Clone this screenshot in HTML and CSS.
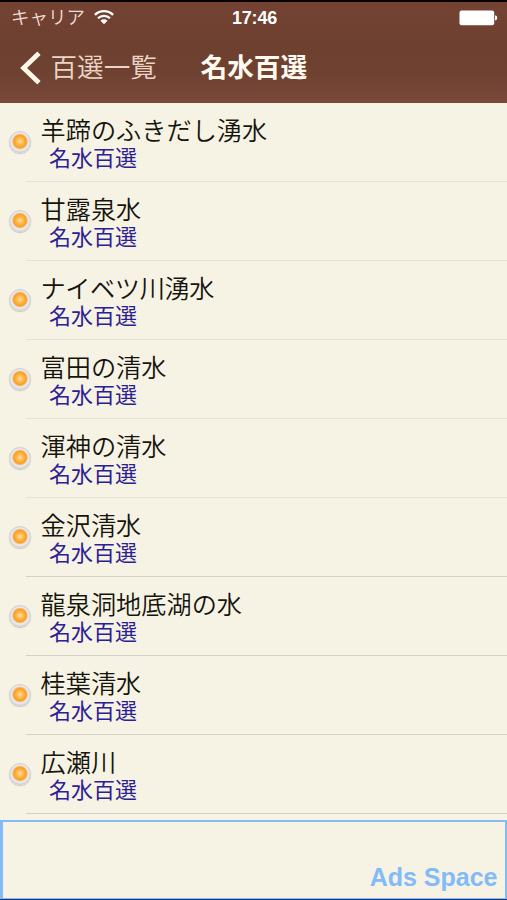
FILE: index.html
```html
<!DOCTYPE html>
<html lang="ja">
<head>
<meta charset="utf-8">
<title>名水百選</title>
<link rel="stylesheet" href="styles.css">
</head>
<body>
<div class="screen">
  <header class="header">
    <div class="status">
      <div class="carrier">
        <span>キャリア</span>
        <svg class="wifi" viewBox="0 0 20 16" fill="none" stroke="#fff" stroke-width="2.3">
          <path d="M.9 5.9a12.9 12.9 0 0 1 18.2 0"/>
          <path d="M4 9.3a8.5 8.5 0 0 1 12 0"/>
          <path d="M10 15.2 6.5 11.8a5 5 0 0 1 7 0z" fill="#fff" stroke="none"/>
        </svg>
      </div>
      <time class="clock">17:46</time>
      <svg class="battery" viewBox="0 0 40 16" fill="#fff">
        <rect x="1.5" y="0.5" width="34.7" height="14.8" rx="2"/>
        <path d="M37 5.2q2.3.3 2.3 2.7t-2.3 2.7z"/>
      </svg>
    </div>
    <nav class="nav">
      <a class="back">
        <svg class="chevron" viewBox="0 0 21 34" fill="none" stroke="#fcf7e6" stroke-width="4.8"><path d="M19 2.2 3.6 17 19 31.8"/></svg>
        <span>百選一覧</span>
      </a>
      <h1 class="heading">名水百選</h1>
    </nav>
  </header>
  <ul class="list">
    <li class="row"><i class="dot"></i><div class="cell"><p class="name">羊蹄のふきだし湧水</p><p class="group">名水百選</p></div></li>
    <li class="row"><i class="dot"></i><div class="cell"><p class="name">甘露泉水</p><p class="group">名水百選</p></div></li>
    <li class="row"><i class="dot"></i><div class="cell"><p class="name tight">ナイベツ川湧水</p><p class="group">名水百選</p></div></li>
    <li class="row"><i class="dot"></i><div class="cell"><p class="name">富田の清水</p><p class="group">名水百選</p></div></li>
    <li class="row"><i class="dot"></i><div class="cell"><p class="name">渾神の清水</p><p class="group">名水百選</p></div></li>
    <li class="row strong"><i class="dot"></i><div class="cell"><p class="name">金沢清水</p><p class="group">名水百選</p></div></li>
    <li class="row strong"><i class="dot"></i><div class="cell"><p class="name">龍泉洞地底湖の水</p><p class="group">名水百選</p></div></li>
    <li class="row strong"><i class="dot"></i><div class="cell"><p class="name">桂葉清水</p><p class="group">名水百選</p></div></li>
    <li class="row strong"><i class="dot"></i><div class="cell"><p class="name">広瀬川</p><p class="group">名水百選</p></div></li>
  </ul>
  <footer class="ad">Ads Space</footer>
</div>
</body>
</html>
```
FILE: styles.css
```css
* { box-sizing: border-box; margin: 0; padding: 0; }

body {
  font-family: "Liberation Sans", "Noto Sans CJK JP", sans-serif;
  background: #f7f3e4;
}

.screen {
  width: 507px;
  height: 900px;
  display: flex;
  flex-direction: column;
  overflow: hidden;
  border-bottom: 1px solid #163b78;
}

.header {
  height: 102.5px;
  flex: none;
  border-top: 2px solid #080403;
  background: linear-gradient(#734232 0, #6d4030 50%, #6e4131 66%, #784839 100%);
  color: #fff;
}

.status {
  height: 32px;
  display: grid;
  grid-template-columns: 1fr auto 1fr;
  align-items: center;
  padding: 0 9px 0 11px;
}

.carrier {
  display: flex;
  align-items: center;
  gap: 9px;
  font-size: 18.5px;
  font-weight: 350;
  line-height: 32px;
  color: #f1ddd1;
}

.wifi { width: 20px; height: 16px; margin-top: -2px; }

.clock {
  font-size: 18px;
  font-weight: bold;
  line-height: 32px;
  letter-spacing: -.2px;
}

.battery { width: 40px; height: 16px; justify-self: end; }

.nav {
  height: 68px;
  display: flex;
  align-items: center;
  padding-left: 20px;
}

.back {
  display: flex;
  align-items: center;
  gap: 9.5px;
  width: 180.5px;
  font-size: 26.6px;
  font-weight: 350;
  color: #ecd5c6;
  line-height: 40px;
}

.chevron { width: 21px; height: 34px; }

.heading {
  font-size: 26.7px;
  font-weight: 700;
  line-height: 40px;
  color: #fffaf0;
}

.list { list-style: none; flex: none; height: 717.5px; }

.row {
  height: 79.05px;
  display: flex;
  padding-left: 9px;
}

.dot {
  flex: none;
  width: 22px;
  height: 22px;
  margin-top: 28.5px;
  border-radius: 50%;
  border: 1px solid #d0d0d2;
  background: radial-gradient(circle at 10px 9.5px, #ffdf9c 0, #ffbc55 3px, #fa9f22 6.2px, #f3bd78 7.2px, #eceaea 8.2px, #dcdce0 11px);
  box-shadow: 0 1px 1px #aaa9;
}

.cell {
  flex: 1;
  margin-left: -5px;
  padding: 10px 0 0 14.5px;
  border-bottom: 1px solid #e5e2d5;
}

.strong .cell { border-bottom-color: #d4d1c9; }

.name {
  font-size: 25.2px;
  font-weight: 350;
  line-height: 36px;
  height: 32px;
  color: #15150e;
  white-space: nowrap;
}

.tight { letter-spacing: -.4px; }

.group {
  padding-left: 8.5px;
  font-size: 22px;
  font-weight: 400;
  line-height: 28px;
  color: #2b2094;
}

.ad {
  flex: 1;
  display: flex;
  justify-content: flex-end;
  align-items: flex-end;
  border: solid #82bbf8;
  border-width: 2px 2px 1px 3px;
  padding: 0 7.5px 6px;
  font-size: 25px;
  font-weight: bold;
  line-height: 30px;
  color: #82bbf8;
}
```
